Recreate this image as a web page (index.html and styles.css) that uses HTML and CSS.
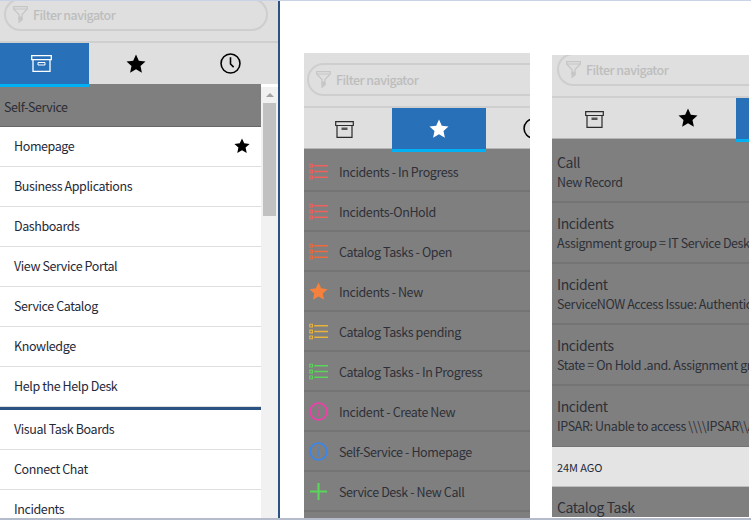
FILE: index.html
```html
<!DOCTYPE html>
<html lang="en">
<head>
    <meta charset="UTF-8">
    <meta name="viewport" content="width=device-width, initial-scale=1.0">
    <title>Filter navigator</title>
    <link rel="stylesheet" href="styles.css">
</head>
<body>
    <svg class="defs" width="0" height="0">
        <symbol id="funnel" viewBox="0 0 15 17">
            <path d="M.7.7h13.600v2.300L9 8.500V14l-3 2.300V8.500L.7 3z" fill="none" stroke="currentColor" stroke-width="1.200"/>
            <path d="M.7 3h13.600M6 11h3v3H6z" fill="currentColor" stroke="currentColor"/>
        </symbol>
        <symbol id="box" viewBox="0 0 21 17">
            <path d="M.7.7h19.600v4H.7zM2 4.700v11.600h17V4.700" fill="none" stroke="currentColor" stroke-width="1.300"/>
            <path d="M7 7.500h7v2.500H7z" fill="none" stroke="currentColor" stroke-width="1"/>
        </symbol>
        <symbol id="box-dark" viewBox="0 0 19 17">
            <path d="M.7.7h17.600v3.800H.7zM2 4.500v11.800h15V4.500" fill="none" stroke="currentColor" stroke-width="1.200"/>
            <path d="M6.500 6.500h6v2.500h-6z" fill="#555"/>
        </symbol>
        <symbol id="star" viewBox="0 0 20 20">
            <path d="M10 .5l2.800 6.200 6.700.8-5 4.500 1.400 6.700L10 15.300l-5.900 3.400 1.400-6.700-5-4.500 6.700-.8z" fill="currentColor"/>
        </symbol>
        <symbol id="clock" viewBox="0 0 20 20">
            <circle cx="10" cy="10" r="9" fill="none" stroke="currentColor" stroke-width="1.500"/>
            <path d="M10 4v6.500l3 3" fill="none" stroke="currentColor" stroke-width="1.500"/>
        </symbol>
        <symbol id="list" viewBox="0 0 18 15">
            <path d="M5 2h13M5 7.500h13M5 13h13" stroke="currentColor" stroke-width="1.500"/>
            <path d="M.7.7h2.600v2.600H.7zM.7 6.200h2.600v2.600H.7zM.7 11.700h2.600v2.600H.7z" fill="none" stroke="currentColor"/>
        </symbol>
        <symbol id="info" viewBox="0 0 20 20">
            <circle cx="10" cy="10" r="8.800" fill="none" stroke="currentColor" stroke-width="1.900"/>
            <path d="M10 8.500V15M10 5v2" stroke="currentColor" stroke-width="1.300" opacity=".7"/>
        </symbol>
        <symbol id="plus" viewBox="0 0 20 20">
            <path d="M10 1v18M1 10h18" stroke="currentColor" stroke-width="2.200"/>
        </symbol>
    </svg>

    <div class="page">
        <!-- real navigator -->
        <div class="nav">
            <div class="filter filter-main">
                <div class="filter-box">
                    <svg class="funnel"><use href="#funnel"/></svg>
                    <span>Filter navigator</span>
                </div>
            </div>
            <div class="tabs">
                <div class="tab tab-a active"><svg class="ico-box"><use href="#box"/></svg></div>
                <div class="tab tab-b"><svg class="ico-star"><use href="#star"/></svg></div>
                <div class="tab tab-c"><svg class="ico-clock"><use href="#clock"/></svg></div>
            </div>
            <div class="nav-body">
                <div class="menu">
                    <div class="menu-head">Self-Service</div>
                    <div class="menu-item">Homepage <svg class="ico-small"><use href="#star"/></svg></div>
                    <div class="menu-item">Business Applications</div>
                    <div class="menu-item">Dashboards</div>
                    <div class="menu-item">View Service Portal</div>
                    <div class="menu-item">Service Catalog</div>
                    <div class="menu-item">Knowledge</div>
                    <div class="menu-item last">Help the Help Desk</div>
                    <div class="menu-item">Visual Task Boards</div>
                    <div class="menu-item">Connect Chat</div>
                    <div class="menu-item">Incidents</div>
                </div>
                <div class="scrollbar">
                    <div class="arrow"></div>
                    <div class="thumb"></div>
                </div>
            </div>
        </div>

        <!-- favourites screenshot -->
        <div class="shot shot-fav">
            <div class="filter filter-fav">
                <div class="filter-box">
                    <svg class="funnel"><use href="#funnel"/></svg>
                    <span>Filter navigator</span>
                </div>
            </div>
            <div class="tabs tabs-shot">
                <div class="tab tab-x"><svg class="ico-box-dark"><use href="#box-dark"/></svg></div>
                <div class="tab tab-y active"><svg class="ico-star"><use href="#star"/></svg></div>
                <div class="tab tab-z"><svg class="ico-clock"><use href="#clock"/></svg></div>
            </div>
            <div class="fav-list">
                <div class="fav"><svg class="fav-ico red"><use href="#list"/></svg>Incidents - In Progress</div>
                <div class="fav"><svg class="fav-ico red"><use href="#list"/></svg>Incidents-OnHold</div>
                <div class="fav"><svg class="fav-ico deep-orange"><use href="#list"/></svg>Catalog Tasks - Open</div>
                <div class="fav"><svg class="fav-ico orange"><use href="#star"/></svg>Incidents - New</div>
                <div class="fav"><svg class="fav-ico yellow"><use href="#list"/></svg>Catalog Tasks pending</div>
                <div class="fav"><svg class="fav-ico green"><use href="#list"/></svg>Catalog Tasks - In Progress</div>
                <div class="fav"><svg class="fav-ico pink"><use href="#info"/></svg>Incident - Create New</div>
                <div class="fav"><svg class="fav-ico blue"><use href="#info"/></svg>Self-Service - Homepage</div>
                <div class="fav"><svg class="fav-ico green"><use href="#plus"/></svg>Service Desk - New Call</div>
            </div>
        </div>

        <!-- history screenshot -->
        <div class="shot shot-hist">
            <div class="filter filter-hist">
                <div class="filter-box">
                    <svg class="funnel"><use href="#funnel"/></svg>
                    <span>Filter navigator</span>
                </div>
            </div>
            <div class="tabs tabs-shot">
                <div class="tab tab-x tab-x-hist"><svg class="ico-box-dark"><use href="#box-dark"/></svg></div>
                <div class="tab tab-w"><svg class="ico-star"><use href="#star"/></svg></div>
                <div class="tab tab-z active"></div>
            </div>
            <div class="hist-list">
                <div class="hist">
                    <div class="hist-title">Call</div>
                    <div class="hist-sub">New Record</div>
                </div>
                <div class="hist">
                    <div class="hist-title">Incidents</div>
                    <div class="hist-sub">Assignment group = IT Service Desk</div>
                </div>
                <div class="hist">
                    <div class="hist-title">Incident</div>
                    <div class="hist-sub">ServiceNOW Access Issue: Authentication</div>
                </div>
                <div class="hist">
                    <div class="hist-title">Incidents</div>
                    <div class="hist-sub">State = On Hold .and. Assignment group</div>
                </div>
                <div class="hist no-line">
                    <div class="hist-title">Incident</div>
                    <div class="hist-sub">IPSAR: Unable to access \\\\IPSAR\\Apps</div>
                </div>
                <div class="hist-time">24M AGO</div>
                <div class="hist">
                    <div class="hist-title">Catalog Task</div>
                </div>
            </div>
        </div>
    </div>
</body>
</html>
```

FILE: styles.css
```css
/* General Styling */
* {
    margin: 0;
    padding: 0;
    box-sizing: border-box;
}

body {
    font-family: "Noto Sans CJK SC", "Noto Sans", sans-serif;
    font-size: 12.5px;
    letter-spacing: -0.4px;
    background: #fff;
    color: #1f2a3a;
    overflow: hidden;
}

.defs {
    display: block;
    height: 0;
}

.page {
    display: flex;
    align-items: flex-start;
    width: 751px;
    height: 520px;
    border-top: 1px solid #c9d3e6;
    border-bottom: 2px solid #b4bccb;
    overflow: hidden;
}

/* Navigator */
.nav {
    flex: none;
    width: 280px;
    height: 100%;
    border-right: 2px solid #2c5282;
    background: #fff;
    overflow: hidden;
}

.filter {
    display: flex;
    align-items: flex-end;
    background: #dfdfdf;
    border-bottom: 2px solid #cfcfcf;
    overflow: hidden;
}

.filter-box {
    display: flex;
    align-items: center;
    flex: none;
    height: 33px;
    border: 2px solid #cecece;
    border-radius: 17px;
    color: #bdbdbd;
    font-weight: 500;
    letter-spacing: -0.55px;
}

.funnel {
    flex: none;
    width: 15px;
    height: 17px;
    margin: 0 5px 0 7px;
    color: #c6c6c6;
}

.filter-main {
    height: 42px;
    padding: 0 11px 10px 4px;
}

.filter-main .filter-box {
    width: 264px;
}

.filter-fav {
    height: 55px;
    padding: 0 0 10px 3px;
}

.filter-fav .filter-box {
    width: 260px;
}

.filter-hist {
    height: 43px;
    padding: 0 0 10px 5px;
}

.filter-hist .filter-box {
    width: 260px;
}

/* active tab hangs 3px over the list below */
.tabs {
    display: flex;
    align-items: flex-start;
    height: 44px;
    position: relative;
    z-index: 1;
}

.tab {
    display: flex;
    align-items: center;
    justify-content: center;
    flex: none;
    height: 41px;
    background: #dfdfdf;
    color: #000;
}

.tab.active {
    height: 44px;
    background: #2871b9;
    border-bottom: 3px solid #00b0f5;
    color: #fff;
}

.tabs-shot .tab:not(.active) {
    border-bottom: 1px solid #b5b5b5;
}

.tab-a {
    width: 89px;
    padding-right: 6px;
}

.tab-b {
    width: 94px;
}

.tab-c {
    width: 95px;
}

.tab-x {
    width: 88px;
    padding: 2px 7px 0 0;
}

.tab-x-hist {
    padding-right: 3px;
}

.tab-y {
    width: 94px;
}

.tab-z {
    width: 94px;
}

.tab-w {
    width: 96px;
}

.ico-box {
    width: 21px;
    height: 17px;
}

.ico-box-dark {
    width: 19px;
    height: 17px;
    color: #2b2b2b;
}

.ico-star {
    width: 20px;
    height: 20px;
}

.ico-clock {
    width: 21px;
    height: 21px;
}

.ico-small {
    width: 16px;
    height: 16px;
    color: #000;
}

.nav-body {
    display: flex;
    align-items: flex-start;
    height: 434px;
    margin-top: -3px;
}

.menu {
    flex: none;
    width: 261px;
}

.menu-head {
    display: flex;
    align-items: center;
    height: 43px;
    padding: 2px 0 0 4px;
    background: #7f7f7f;
    border-bottom: 1px solid #666;
    color: #2c2c33;
}

.menu-item {
    display: flex;
    align-items: center;
    justify-content: space-between;
    height: 40px;
    padding: 0 11px 2px 14px;
    border-bottom: 1px solid #dedede;
}

.menu-item.last {
    height: 43px;
    padding-bottom: 4px;
    border-bottom: 3px solid #2c5282;
    box-shadow: inset 0 -1px 0 #dedede;
}

.scrollbar {
    flex: none;
    width: 17px;
    height: 431px;
    margin-top: 3px;
    background: #f1f1f1;
    padding: 0 2px;
}

.arrow {
    width: 0;
    height: 0;
    margin: 6px auto 6px;
    border-left: 4px solid transparent;
    border-right: 4px solid transparent;
    border-bottom: 4px solid #a3a3a3;
}

.thumb {
    height: 113px;
    background: #c1c1c1;
}

/* Screenshots */
.shot {
    flex: none;
    overflow: hidden;
    background: #7f7f7f;
}

.shot-fav {
    width: 226px;
    height: 465px;
    margin: 52px 0 0 24px;
}

.shot-hist {
    width: 197px;
    height: 462px;
    margin: 54px 0 0 22px;
}

.fav-list,
.hist-list {
    margin-top: -3px;
}

.fav {
    display: flex;
    align-items: center;
    height: 40px;
    border-bottom: 2px solid #747474;
    padding-left: 5px;
    color: #2e3038;
    white-space: nowrap;
}

.fav-list .fav:first-child {
    height: 43px;
    padding-top: 4px;
}

.fav-ico {
    flex: none;
    width: 19px;
    height: 19px;
    margin-right: 11px;
}

.red {
    color: #f0605c;
}

.deep-orange {
    color: #ee6a3c;
}

.orange {
    color: #f5813c;
}

.yellow {
    color: #e8b23c;
}

.green {
    color: #5ad65a;
}

.pink {
    color: #ee3fa8;
}

.blue {
    color: #3b86e8;
}

.hist {
    height: 61px;
    padding: 9px 0 0 5px;
    border-bottom: 2px solid #747474;
    color: #2e3038;
    white-space: nowrap;
    overflow: hidden;
}

.hist-list .hist:first-child {
    height: 64px;
    padding-top: 12px;
}

.hist.no-line {
    border-bottom: 1px solid #747474;
}

.hist-title {
    font-size: 14px;
    line-height: 22px;
}

.hist-sub {
    line-height: 18px;
}

.hist-time {
    display: flex;
    align-items: center;
    height: 40px;
    padding-left: 5px;
    background: #e4e4e4;
    border-bottom: 1px solid #bdbdbd;
    font-size: 11px;
    letter-spacing: -0.1px;
}
```
